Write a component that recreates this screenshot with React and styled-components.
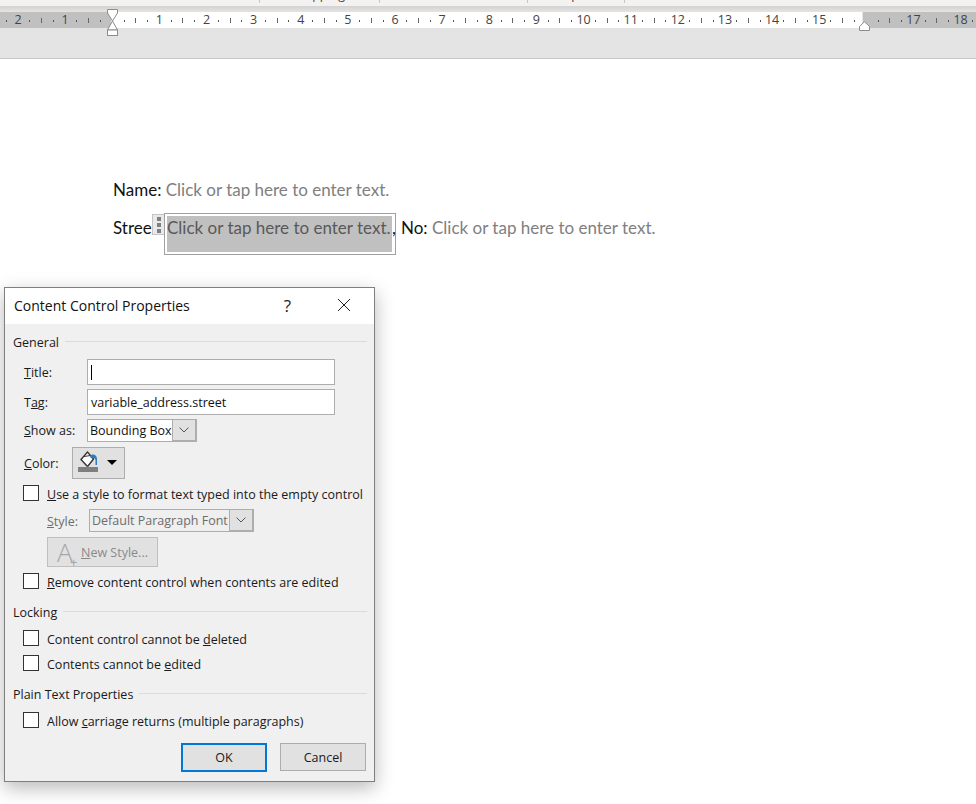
import React from 'react'
import styled, { createGlobalStyle } from 'styled-components'

const UI_FONT = '"Open Sans", "Noto Sans", sans-serif'
const DOC_FONT = 'Lato, "Liberation Sans", sans-serif'

const GlobalStyle = createGlobalStyle`
  html, body {
    margin: 0;
    padding: 0;
    background: #fff;
  }
  * {
    box-sizing: border-box;
  }
`

// 0 and 16 sit under the indent markers, so those cells carry no number
const rulerCells = ['3', '2', '1', '', ...Array.from({ length: 18 }, (_, i) => (i === 15 ? '' : String(i + 1)))]
const ribbonGroups = [
  { label: 'Controls', width: 260, shift: 10 },
  { label: 'Mapping', width: 120, shift: 0 },
  { label: 'Protect', width: 148, shift: 0 },
  { label: 'Templates', width: 97, shift: 0 },
]
const PLACEHOLDER = 'Click or tap here to enter text.'

function Chevron() {
  return (
    <svg width="10" height="6" viewBox="0 0 10 6">
      <polyline points="0.5,0.5 5,5 9.5,0.5" fill="none" stroke="#555" strokeWidth="1" />
    </svg>
  )
}

function Select({ value, width, disabled }) {
  return (
    <SelectBox $width={width} $disabled={disabled}>
      <SelectValue $disabled={disabled}>{value}</SelectValue>
      <SelectArrow>
        <Chevron />
      </SelectArrow>
    </SelectBox>
  )
}

function CheckRow({ top, children }) {
  return (
    <CheckLine $top={top}>
      <CheckBox />
      <LineText>{children}</LineText>
    </CheckLine>
  )
}

function Group({ top, children }) {
  return (
    <GroupHead $top={top}>
      <LineText>{children}</LineText>
      <GroupRule />
    </GroupHead>
  )
}

function App() {
  return (
    <Page>
      <GlobalStyle />
      <Ribbon>
        {ribbonGroups.map((group) => (
          <RibbonGroup key={group.label} $width={group.width} $shift={group.shift}>
            <RibbonLabel>{group.label}</RibbonLabel>
          </RibbonGroup>
        ))}
      </Ribbon>
      <RibbonShade />
      <RulerBar>
        <RulerTrack>
          {rulerCells.map((label, i) => (
            <RulerCell key={i}>
              <RulerNum>{label}</RulerNum>
              <RulerDot />
              <RulerTick />
              <RulerDot />
            </RulerCell>
          ))}
        </RulerTrack>
        <LeftMarker width="12" height="27" viewBox="0 0 12 27">
          <path
            d="M0.5 0.5H10.5V4L5.5 12L10.5 21H0.5L5.5 12L0.5 4Z"
            fill="#fff"
            stroke="#8c8c8c"
          />
          <rect x="0.5" y="21" width="10" height="5.5" fill="#fff" stroke="#8c8c8c" />
        </LeftMarker>
        <RightMarker width="12" height="10" viewBox="0 0 12 10">
          <path d="M5.5 0.7L10.5 5.5V9.5H0.5V5.5Z" fill="#fff" stroke="#8c8c8c" />
        </RightMarker>
      </RulerBar>
      <RulerFoot />

      <Doc>
        <DocLine>
          Name: <Placeholder>{PLACEHOLDER}</Placeholder>
        </DocLine>
        <ControlLine>
          <Clipped>Street</Clipped>
          <Handle>
            <HandleDot />
            <HandleDot />
            <HandleDot />
          </Handle>
          <ControlBox>
            <ControlFill>{PLACEHOLDER}</ControlFill>
            <Comma>,</Comma>
          </ControlBox>
          <AfterControl>
            No: <Placeholder>{PLACEHOLDER}</Placeholder>
          </AfterControl>
        </ControlLine>
      </Doc>

      <Dialog>
        <TitleBar>
          <DialogTitle>Content Control Properties</DialogTitle>
          <HelpMark>?</HelpMark>
          <CloseIcon width="14" height="14" viewBox="0 0 14 14">
            <path d="M1 1L13 13M13 1L1 13" stroke="#222" strokeWidth="1" fill="none" />
          </CloseIcon>
        </TitleBar>
        <DialogBody>
          <Group top={10}>General</Group>

          <FieldRow $top={9} $height={26}>
            <FieldLabel>
              <u>T</u>itle:
            </FieldLabel>
            <TextInput>
              <Caret />
            </TextInput>
          </FieldRow>
          <FieldRow $top={4} $height={26}>
            <FieldLabel>
              T<u>a</u>g:
            </FieldLabel>
            <TextInput>variable_address.street</TextInput>
          </FieldRow>
          <FieldRow $top={4} $height={23}>
            <FieldLabel>
              <u>S</u>how as:
            </FieldLabel>
            <Select value="Bounding Box" width={110} />
          </FieldRow>
          <FieldRow $top={5} $height={32}>
            <ColorLabel>
              <u>C</u>olor:
            </ColorLabel>
            <ColorButton>
              <svg width="24" height="24" viewBox="0 0 24 24">
                <path d="M3 11.5L9.5 4L15.5 11L10 18H9Z" fill="#fff" stroke="#333" strokeWidth="1.4" />
                <path d="M6 8.5L12.5 7.5" stroke="#333" strokeWidth="1" />
                <path d="M12 8C14 5.5 18.5 6 19 10.5V17H17.5V12C17 9.5 14.5 9 13 10.5Z" fill="#2b7cc4" />
                <rect x="0" y="19" width="20" height="5" fill="#7f7f7f" />
              </svg>
              <ColorCaret />
            </ColorButton>
          </FieldRow>

          <CheckRow top={6}>
            <u>U</u>se a style to format text typed into the empty control
          </CheckRow>

          <StyleRow>
            <StyleLabel>
              <u>S</u>tyle:
            </StyleLabel>
            <Select value="Default Paragraph Font" width={165} disabled />
          </StyleRow>
          <NewStyleButton>
            <BigA>
              A<PlusSign>+</PlusSign>
            </BigA>
            <span>
              <u>N</u>ew Style...
            </span>
          </NewStyleButton>

          <CheckRow top={6}>
            <u>R</u>emove content control when contents are edited
          </CheckRow>

          <Group top={15}>Locking</Group>
          <CheckRow top={10}>
            Content control cannot be <u>d</u>eleted
          </CheckRow>
          <CheckRow top={9}>
            Contents cannot be <u>e</u>dited
          </CheckRow>

          <Group top={15}>Plain Text Properties</Group>
          <CheckRow top={10}>
            Allow <u>c</u>arriage returns (multiple paragraphs)
          </CheckRow>

          <ButtonRow>
            <DialogButton $primary>OK</DialogButton>
            <DialogButton>Cancel</DialogButton>
          </ButtonRow>
        </DialogBody>
      </Dialog>
    </Page>
  )
}

export default App

const Page = styled.div`
  position: relative;
  width: 976px;
  height: 804px;
  overflow: hidden;
  background: #fff;
`

const Ribbon = styled.div`
  display: flex;
  height: 6px;
  background: #f3f2f1;
  overflow: hidden;
  font-family: ${UI_FONT};
  font-size: 12.5px;
  color: #444;
`

const RibbonGroup = styled.div`
  flex: none;
  width: ${(p) => p.$width}px;
  height: 3px;
  padding-right: ${(p) => p.$shift}px;
  border-right: 1px solid #c8c6c4;
  text-align: center;
  white-space: nowrap;
`

const RibbonLabel = styled.div`
  margin-top: -13px;
  line-height: 16px;
`

const RibbonShade = styled.div`
  height: 6px;
  background: linear-gradient(to bottom, #d2d2d2, #e4e4e4);
`

const RulerBar = styled.div`
  position: relative;
  height: 16px;
  background: linear-gradient(
    to right,
    #c0c0c0 111px,
    #fff 111px,
    #fff 862px,
    #e6e6e6 862px,
    #e6e6e6 863px,
    #c0c0c0 863px
  );
`

const RulerTrack = styled.div`
  display: flex;
  height: 100%;
  margin-left: -35px;
`

const RulerCell = styled.div`
  flex: none;
  display: grid;
  grid-template-columns: repeat(4, 11.7875px);
  place-items: center;
  height: 100%;
`

const RulerNum = styled.span`
  font-family: ${UI_FONT};
  font-size: 12.5px;
  line-height: 16px;
  color: #444;
`

const RulerDot = styled.i`
  display: block;
  width: 1px;
  height: 2px;
  margin-top: 1px;
  background: #555;
`

const RulerTick = styled.i`
  display: block;
  width: 1px;
  height: 5px;
  margin-top: 1px;
  background: #666;
`

const LeftMarker = styled.svg`
  position: absolute;
  left: 107px;
  top: -3px;
`

const RightMarker = styled.svg`
  position: absolute;
  left: 859px;
  top: 9px;
`

const RulerFoot = styled.div`
  height: 31px;
  background: #e4e4e4;
  border-bottom: 1px solid #c6c6c6;
`

const Doc = styled.div`
  padding: 119px 0 0 113px;
  font-family: ${DOC_FONT};
  font-size: 17px;
  color: #111;
`

const DocLine = styled.div`
  height: 22px;
  padding-top: 1px;
  line-height: 22px;
  white-space: pre;
`

const Placeholder = styled.span`
  color: #808080;
`

const ControlLine = styled.div`
  display: flex;
  align-items: flex-start;
  margin-top: 13px;
  line-height: 22px;
  white-space: pre;
`

const Clipped = styled.div`
  flex: none;
  width: 39px;
  margin-top: 4px;
  overflow: hidden;
`

const Handle = styled.div`
  flex: none;
  display: flex;
  flex-direction: column;
  align-items: center;
  gap: 2px;
  width: 12px;
  height: 21px;
  margin-top: 1px;
  padding-top: 2px;
  background: #e9e9e9;
  border: 1px solid #c4c4c4;
  border-right: none;
`

const HandleDot = styled.i`
  display: block;
  width: 4px;
  height: 4px;
  background: #808080;
`

const ControlBox = styled.div`
  flex: none;
  display: flex;
  width: 232px;
  height: 42px;
  padding: 2px;
  border: 1px solid #a0a0a0;
`

const ControlFill = styled.div`
  flex: none;
  width: 225px;
  height: 36px;
  padding-top: 1px;
  background: #c0c0c0;
  color: #595959;
`

const Comma = styled.span`
  padding-top: 1px;
`

const AfterControl = styled.div`
  margin: 4px 0 0 5px;
`

const Dialog = styled.div`
  position: absolute;
  left: 4px;
  top: 287px;
  width: 371px;
  height: 495px;
  border: 1px solid #7f7f7f;
  background: #f0f0f0;
  box-shadow: 0 6px 18px rgba(0, 0, 0, 0.28);
  font-family: ${UI_FONT};
  font-size: 12.5px;
  color: #1a1a1a;
`

const TitleBar = styled.div`
  display: flex;
  align-items: center;
  height: 36px;
  padding: 0 0 2px 9px;
  background: #fff;
`

const DialogTitle = styled.div`
  flex: 1;
  font-size: 14px;
  color: #111;
`

const HelpMark = styled.div`
  font-size: 17px;
  margin-right: 46px;
  color: #222;
`

const CloseIcon = styled.svg`
  margin-right: 23px;
`

const DialogBody = styled.div`
  padding: 0 7px 0 8px;
`

const LineText = styled.span`
  padding-top: 2px;
`

const GroupHead = styled.div`
  display: flex;
  align-items: center;
  gap: 6px;
  height: 16px;
  margin-top: ${(p) => p.$top}px;
  line-height: 16px;
`

const GroupRule = styled.div`
  flex: 1;
  height: 1px;
  margin-top: -2px;
  background: #dcdcdc;
`

const FieldRow = styled.div`
  display: flex;
  align-items: center;
  height: ${(p) => p.$height}px;
  margin-top: ${(p) => p.$top}px;
  padding-left: 11px;
`

const FieldLabel = styled.div`
  flex: none;
  width: 63px;
`

const ColorLabel = styled(FieldLabel)`
  width: 48px;
`

const TextInput = styled.div`
  display: flex;
  align-items: center;
  width: 248px;
  height: 100%;
  padding-left: 3px;
  background: #fff;
  border: 1px solid #adadad;
  color: #111;
`

const Caret = styled.i`
  display: block;
  width: 1px;
  height: 15px;
  background: #000;
`

const SelectBox = styled.div`
  display: flex;
  width: ${(p) => p.$width}px;
  height: 23px;
  background: ${(p) => (p.$disabled ? '#efefef' : '#fff')};
  border: 1px solid #adadad;
`

const SelectValue = styled.div`
  flex: 1;
  min-width: 0;
  padding-left: 2px;
  line-height: 21px;
  white-space: nowrap;
  overflow: hidden;
  color: ${(p) => (p.$disabled ? '#6d6d6d' : '#111')};
`

const SelectArrow = styled.div`
  flex: none;
  display: flex;
  align-items: center;
  justify-content: center;
  width: 24px;
  background: #e1e1e1;
  border-left: 1px solid #adadad;
  border-right: 1px solid #adadad;
  border-bottom: 1px solid #adadad;
`

const ColorButton = styled.div`
  display: flex;
  align-items: flex-start;
  width: 53px;
  height: 32px;
  padding: 0 0 0 5px;
  background: #e1e1e1;
  border: 1px solid #adadad;
`

const ColorCaret = styled.i`
  display: block;
  margin: 12px 0 0 5px;
  border-left: 5px solid transparent;
  border-right: 5px solid transparent;
  border-top: 5px solid #000;
`

const CheckLine = styled.div`
  display: flex;
  align-items: center;
  gap: 8px;
  height: 16px;
  margin-top: ${(p) => p.$top}px;
  padding-left: 10px;
  white-space: nowrap;
`

const CheckBox = styled.i`
  flex: none;
  display: block;
  width: 16px;
  height: 16px;
  background: #fff;
  border: 1px solid #333;
`

const StyleRow = styled.div`
  display: flex;
  align-items: center;
  height: 23px;
  margin-top: 8px;
  padding-left: 34px;
`

const StyleLabel = styled.div`
  flex: none;
  width: 42px;
  padding-top: 2px;
  color: #6d6d6d;
`

const NewStyleButton = styled.div`
  display: flex;
  align-items: center;
  gap: 3px;
  width: 111px;
  height: 30px;
  margin: 5px 0 0 34px;
  padding-left: 9px;
  background: #e1e1e1;
  border: 1px solid #bfbfbf;
  color: #8a8a8a;
  white-space: nowrap;
`

const BigA = styled.span`
  position: relative;
  flex: none;
  width: 21px;
  font-size: 26px;
  font-weight: 300;
  line-height: 28px;
  color: #a6a6a6;
`

const PlusSign = styled.span`
  position: absolute;
  left: 13px;
  bottom: -4px;
  font-size: 13px;
  font-weight: 400;
  line-height: 16px;
`

const ButtonRow = styled.div`
  display: flex;
  justify-content: flex-end;
  gap: 13px;
  margin: 15px 1px 0 0;
`

const DialogButton = styled.div`
  display: flex;
  align-items: center;
  justify-content: center;
  width: 86px;
  height: ${(p) => (p.$primary ? 29 : 28)}px;
  background: #e1e1e1;
  border: ${(p) => (p.$primary ? '2px solid #0078d7' : '1px solid #adadad')};
  color: #1a1a1a;
`
